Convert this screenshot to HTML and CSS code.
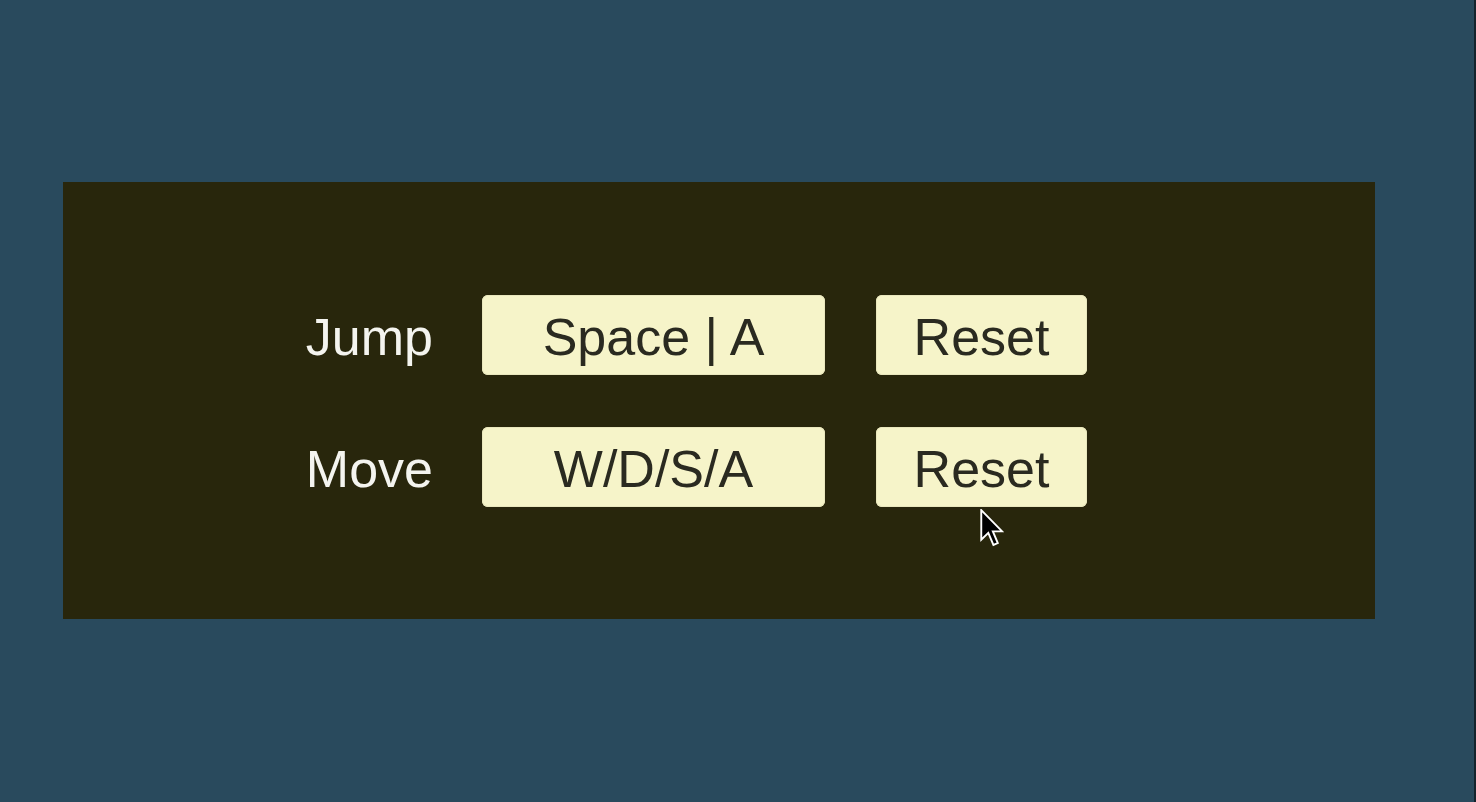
FILE: index.html
```html
<!DOCTYPE html>
<html>
<head>
<meta charset="utf-8">
<link rel="stylesheet" href="styles.css">
</head>
<body>
<div class="panel">
  <div class="grid">
    <div class="label">Jump</div>
    <div class="btn">Space | A</div>
    <div class="btn btn-reset">Reset</div>
    <div class="label">Move</div>
    <div class="btn">W/D/S/A</div>
    <div class="btn btn-reset">Reset</div>
  </div>
</div>
<svg class="cursor" width="24" height="38" viewBox="0 0 12.5 20">
  <path d="M0.6,0.6 L0.6,16.2 L4.3,12.6 L7,18.9 L9.3,17.9 L6.7,11.8 L11.6,11.8 Z" fill="#000" stroke="#fff" stroke-width="1" stroke-linejoin="miter"/>
</svg>
</body>
</html>
```
FILE: styles.css
```css
html, body {
  margin: 0;
  padding: 0;
}
body {
  width: 1476px;
  height: 802px;
  box-sizing: border-box;
  background: #294a5d;
  border-right: 2px solid #14232c;
  position: relative;
  overflow: hidden;
  padding-top: 182px;
  padding-left: 63px;
  font-family: "Liberation Sans", Arial, sans-serif;
}
.panel {
  width: 1312px;
  height: 437px;
  box-sizing: border-box;
  background: #28260c;
  padding-top: 113px;
}
.grid {
  display: grid;
  grid-template-columns: 419px 343px 262px;
  grid-auto-rows: 80px;
  row-gap: 52px;
}
.label {
  color: #f4f4ef;
  font-size: 52px;
  padding-right: 49px;
  padding-top: 3px;
  box-sizing: border-box;
  display: flex;
  align-items: center;
  justify-content: flex-end;
}
.btn {
  background: #f6f4c9;
  color: #2a2a20;
  border-radius: 6px;
  box-shadow: inset 0 0 0 1px #e9e7bd;
  font-size: 52px;
  padding-top: 3px;
  box-sizing: border-box;
  display: flex;
  align-items: center;
  justify-content: center;
}
.btn-reset {
  margin-left: 51px;
}
.cursor {
  position: absolute;
  left: 980px;
  top: 509px;
}
```
